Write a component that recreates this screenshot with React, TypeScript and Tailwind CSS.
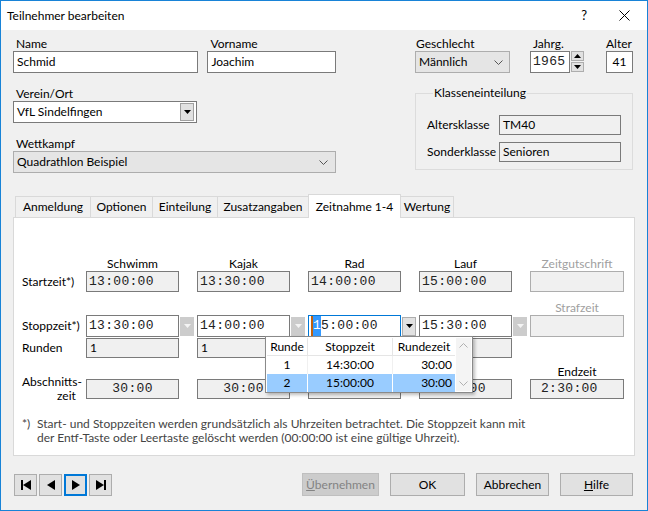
import React from 'react';

const Tri = ({ color = '#000', up = false }: { color?: string; up?: boolean }) => (
  <svg width="7" height="4" viewBox="0 0 7 4">
    <path d={up ? 'M0 4h7L3.5 0z' : 'M0 0h7L3.5 4z'} fill={color} />
  </svg>
);

const Chevron = ({ up = false, color = '#555' }: { up?: boolean; color?: string }) => (
  <svg width="9" height="5" viewBox="0 0 9 5">
    <path d={up ? 'M0.5 4.5L4.5 0.5L8.5 4.5' : 'M0.5 0.5L4.5 4.5L8.5 0.5'} stroke={color} fill="none" />
  </svg>
);

const mono = "font-['Liberation_Mono',monospace] text-[13px] tracking-[0.3px] text-[#222222]";

const DropBtn = ({ active }: { active?: boolean }) => (
  <div
    className={`ml-[1px] w-[14px] h-[19px] flex items-center justify-center border ${
      active ? 'bg-[#e1e1e1] border-[#adadad]' : 'bg-[#cccccc] border-[#cccccc]'
    }`}
  >
    <Tri color={active ? '#000' : '#f4f4f4'} />
  </div>
);

const GrayBox = ({ children, className = '' }: { children?: React.ReactNode; className?: string }) => (
  <div className={`h-full border border-[#7a7a7a] bg-[#f0f0f0] flex items-center ${className}`}>{children}</div>
);

const NavBtn = ({ kind, focused }: { kind: 'first' | 'prev' | 'next' | 'last'; focused?: boolean }) => (
  <div
    className={`w-[23px] h-[22px] bg-[#e1e1e1] flex items-center justify-center ${
      focused ? 'border-2 border-[#0078d7]' : 'border border-[#adadad]'
    }`}
  >
    <svg width="14" height="12" viewBox="0 0 14 12">
      {kind === 'first' && (
        <>
          <rect x="2" y="1" width="2" height="10" fill="#000" />
          <path d="M12 1v10L4 6z" fill="#000" />
        </>
      )}
      {kind === 'prev' && <path d="M11 1v10L3 6z" fill="#000" />}
      {kind === 'next' && <path d="M3 1v10l8-5z" fill="#000" />}
      {kind === 'last' && (
        <>
          <path d="M2 1v10l8-5z" fill="#000" />
          <rect x="10" y="1" width="2" height="10" fill="#000" />
        </>
      )}
    </svg>
  </div>
);

const Button = ({ children, w, disabled }: { children: React.ReactNode; w: string; disabled?: boolean }) => (
  <div
    className={`${w} h-[23px] flex items-center justify-center border ${
      disabled ? 'bg-[#cccccc] border-[#bfbfbf] text-[#838383]' : 'bg-[#e1e1e1] border-[#adadad] text-black'
    }`}
  >
    {children}
  </div>
);

const tabs = ['Anmeldung', 'Optionen', 'Einteilung', 'Zusatzangaben', 'Zeitnahme 1-4', 'Wertung'];
const tabWidths = ['w-[76px]', 'w-[63px]', 'w-[66px]', 'w-[92px]', 'w-[93px]', 'w-[54px]'];

export default function App() {
  const start = ['13:00:00', '13:30:00', '14:00:00', '15:00:00'];
  const stop = ['13:30:00', '14:00:00', '', '15:30:00'];

  return (
    <div className="w-[648px] h-[511px] border border-[#1883d7] flex flex-col font-[Lato,sans-serif] text-[12px] text-black overflow-hidden">
      {/* Title bar */}
      <div className="h-[29px] bg-white flex items-center pl-[6px] shrink-0">
        <span>Teilnehmer bearbeiten</span>
        <span className="ml-auto mr-[32px] text-[13px]">?</span>
        <svg width="11" height="11" viewBox="0 0 11 11" className="mr-[17px]">
          <path d="M0.5 0.5L10.5 10.5M10.5 0.5L0.5 10.5" stroke="#000" strokeWidth="1" />
        </svg>
      </div>

      <div className="flex-1 bg-[#f0f0f0] flex flex-col">
        {/* Top form */}
        <div className="flex pl-[12px] pt-[6px]">
          <div className="w-[323px] flex flex-col">
            <div className="flex gap-[9px]">
              <div className="w-[186px]">
                <div className="h-[15px] leading-[15px] pl-[3px]">Name</div>
                <div className="h-[22px] border border-[#7a7a7a] bg-white flex items-center pl-[3px]">Schmid</div>
              </div>
              <div className="w-[129px]">
                <div className="h-[15px] leading-[15px] pl-[3px]">Vorname</div>
                <div className="h-[22px] border border-[#7a7a7a] bg-white flex items-center pl-[3px]">Joachim</div>
              </div>
            </div>
            <div className="mt-[13px] h-[15px] leading-[15px] pl-[3px]">Verein/Ort</div>
            <div className="w-[184px] h-[22px] border border-[#7a7a7a] bg-white flex items-center pl-[3px] pr-[2px]">
              <span>VfL Sindelfingen</span>
              <div className="ml-auto w-[14px] h-[18px] bg-[#e1e1e1] border border-[#a0a0a0] flex items-center justify-center">
                <Tri />
              </div>
            </div>
            <div className="mt-[13px] h-[15px] leading-[15px] pl-[3px]">Wettkampf</div>
            <div className="h-[22px] border border-[#adadad] bg-[#e5e5e5] flex items-center pl-[3px] pr-[7px]">
              <span>Quadrathlon Beispiel</span>
              <span className="ml-auto">
                <Chevron />
              </span>
            </div>
          </div>

          <div className="ml-[79px] w-[218px] flex flex-col">
            <div className="flex">
              <div className="w-[95px]">
                <div className="h-[15px] leading-[15px] pl-[1px]">Geschlecht</div>
                <div className="h-[22px] border border-[#adadad] bg-[#e5e5e5] flex items-center pl-[3px] pr-[6px]">
                  <span>Männlich</span>
                  <span className="ml-auto">
                    <Chevron />
                  </span>
                </div>
              </div>
              <div className="ml-[20px]">
                <div className="h-[15px] leading-[15px] pl-[3px]">Jahrg.</div>
                <div className="flex">
                  <div className={`w-[40px] h-[22px] border border-[#7a7a7a] bg-white flex items-center pl-[2px] ${mono} text-[12px]`}>
                    1965
                  </div>
                  <div className="ml-[1px] w-[13px] flex flex-col gap-[1px]">
                    <div className="h-[10px] bg-[#e1e1e1] border border-[#adadad] flex items-center justify-center">
                      <Tri up />
                    </div>
                    <div className="h-[10px] bg-[#e1e1e1] border border-[#adadad] flex items-center justify-center">
                      <Tri />
                    </div>
                  </div>
                </div>
              </div>
              <div className="ml-[22px]">
                <div className="h-[15px] leading-[15px]">Alter</div>
                <div className="w-[27px] h-[22px] border border-[#7a7a7a] bg-white flex items-center justify-center">41</div>
              </div>
            </div>
            <fieldset className="mt-[13px] h-[84px] border border-[#dcdcdc] pl-[11px]">
              <legend className="ml-[6px] px-[1px] leading-[14px]">Klasseneinteilung</legend>
              <div className="mt-[15px] flex items-center h-[20px]">
                <span className="w-[72px]">Altersklasse</span>
                <GrayBox className="w-[122px] pl-[3px]">TM40</GrayBox>
              </div>
              <div className="mt-[7px] flex items-center h-[20px]">
                <span className="w-[72px]">Sonderklasse</span>
                <GrayBox className="w-[122px] pl-[3px]">Senioren</GrayBox>
              </div>
            </fieldset>
          </div>
        </div>

        {/* Tabs */}
        <div className="mt-[21px] ml-[14px] flex items-end h-[23px] relative z-10">
          {tabs.map((t, i) =>
            i === 4 ? (
              <div
                key={t}
                className={`${tabWidths[i]} -ml-px h-[24px] -mb-px bg-white border border-b-0 border-[#d9d9d9] flex items-start justify-center pt-[3px]`}
              >
                {t}
              </div>
            ) : (
              <div
                key={t}
                className={`${tabWidths[i]} ${i === 0 ? '' : '-ml-px'} h-[21px] bg-[#f0f0f0] border border-b-0 border-[#d9d9d9] flex items-center justify-center`}
              >
                {t}
              </div>
            )
          )}
        </div>

        {/* Tab panel */}
        <div className="ml-[12px] w-[622px] h-[239px] bg-white border border-[#d9d9d9] relative pl-[8px] pt-[39px]">
          {/* header row */}
          <div className="flex h-[14px] leading-[14px]">
            <div className="w-[64px]" />
            {['Schwimm', 'Kajak', 'Rad', 'Lauf'].map((c) => (
              <div key={c} className="w-[111px]">
                <div className="w-[93px] text-center">{c}</div>
              </div>
            ))}
            <div className="w-[94px] text-center text-[#a0a0a0]">Zeitgutschrift</div>
          </div>

          {/* Startzeit */}
          <div className="flex items-center h-[21px]">
            <div className="w-[64px]">Startzeit*)</div>
            {start.map((v) => (
              <div key={v} className="w-[111px] h-full">
                <GrayBox className={`w-[93px] pl-[2px] ${mono}`}>{v}</GrayBox>
              </div>
            ))}
            <GrayBox className="w-[94px] border-[#adadad]" />
          </div>

          {/* Strafzeit header */}
          <div className="mt-[9px] flex h-[14px] leading-[14px]">
            <div className="w-[508px]" />
            <div className="w-[94px] text-center text-[#a0a0a0]">Strafzeit</div>
          </div>

          {/* Stoppzeit */}
          <div className="flex items-center h-[22px]">
            <div className="w-[64px]">Stoppzeit*)</div>
            {stop.map((v, i) => (
              <div key={i} className="w-[111px] h-full flex items-center">
                {i === 2 ? (
                  <div className={`w-[93px] h-full border border-[#0078d7] bg-white flex items-center pl-[2px] ${mono}`}>
                    <span className="border-l-2 border-[#c2620e] bg-[#3399ff] text-white">1</span>
                    <span>5:00:00</span>
                  </div>
                ) : (
                  <div className={`w-[93px] h-full border border-[#7a7a7a] bg-white flex items-center pl-[2px] ${mono}`}>{v}</div>
                )}
                <DropBtn active={i === 2} />
              </div>
            ))}
            <GrayBox className="w-[94px] border-[#adadad]" />
          </div>

          {/* Runden (Rad/Lauf values lie under the open list) */}
          <div className="mt-[1px] flex items-center h-[20px]">
            <div className="w-[64px]">Runden</div>
            {[0, 1, 2, 3].map((i) => (
              <div key={i} className="w-[111px] h-full">
                <GrayBox className="w-[93px] pl-[3px]">{i < 2 ? '1' : ''}</GrayBox>
              </div>
            ))}
          </div>

          {/* Endzeit header */}
          <div className="mt-[7px] flex h-[14px] leading-[14px]">
            <div className="w-[508px]" />
            <div className="w-[94px] text-center">Endzeit</div>
          </div>

          {/* Abschnittszeit */}
          <div className="flex items-center h-[20px]">
            <div className="w-[64px] flex flex-col leading-[14px]">
              <span className="h-[14px]">Abschnitts-</span>
              <span className="h-[14px] pl-[35px]">zeit</span>
            </div>
            {[0, 1, 2, 3].map((i) => (
              <div key={i} className="w-[111px] h-full">
                <GrayBox className={`w-[93px] justify-center ${mono}`}>{i === 2 ? '' : '30:00'}</GrayBox>
              </div>
            ))}
            <GrayBox className={`w-[94px] pl-[10px] ${mono}`}>2:30:00</GrayBox>
          </div>

          {/* Footnote */}
          <div className="mt-[18px] flex text-[12px] leading-[14px] text-[#444444]">
            <span className="w-[15px]">*)</span>
            <span className="w-[560px]">
              Start- und Stoppzeiten werden grundsätzlich als Uhrzeiten betrachtet. Die Stoppzeit kann mit
              <br />
              der Entf-Taste oder Leertaste gelöscht werden (00:00:00 ist eine gültige Uhrzeit).
            </span>
          </div>

          {/* Dropdown popup */}
          <div className="absolute left-[251px] top-[118px] w-[208px] h-[57px] bg-white border border-[#8a8a8a] shadow-[2px_2px_3px_rgba(0,0,0,0.25)] flex p-[1px]">
            <div className="flex flex-col w-[188px]">
              <div className="flex h-[18px] border-b border-[#e5e5e5]">
                <div className="w-[41px] border-r border-[#e5e5e5] flex items-center justify-center">Runde</div>
                <div className="w-[85px] border-r border-[#e5e5e5] flex items-center justify-center">Stoppzeit</div>
                <div className="w-[62px] flex items-center justify-center">Rundezeit</div>
              </div>
              <div className="flex h-[18px]">
                <div className="w-[41px] border-r border-[#f0f0f0] flex items-center justify-center">1</div>
                <div className="w-[85px] border-r border-[#f0f0f0] flex items-center justify-center">14:30:00</div>
                <div className="w-[62px] flex items-center justify-end pr-[3px]">30:00</div>
              </div>
              <div className="flex h-[18px] bg-[#99ccff]">
                <div className="w-[41px] border-r border-white flex items-center justify-center">2</div>
                <div className="w-[85px] border-r border-white flex items-center justify-center">15:00:00</div>
                <div className="w-[62px] flex items-center justify-end pr-[3px]">30:00</div>
              </div>
            </div>
            <div className="w-[16px] ml-[1px] bg-[#f4f4f4] flex flex-col items-center justify-between py-[5px]">
              <Chevron up color="#b0b0b0" />
              <Chevron color="#b0b0b0" />
            </div>
          </div>
        </div>

        {/* Footer */}
        <div className="mt-[17px] flex items-center pl-[13px] pr-[14px]">
          <div className="flex gap-[2px]">
            <NavBtn kind="first" />
            <NavBtn kind="prev" />
            <NavBtn kind="next" focused />
            <NavBtn kind="last" />
          </div>
          <div className="ml-auto flex gap-[11px]">
            <Button w="w-[77px]" disabled>
              <span>
                <span className="underline">Ü</span>bernehmen
              </span>
            </Button>
            <Button w="w-[75px]">OK</Button>
            <Button w="w-[73px]">Abbrechen</Button>
            <Button w="w-[73px]">
              <span>
                <span className="underline">H</span>ilfe
              </span>
            </Button>
          </div>
        </div>
      </div>
    </div>
  );
}
